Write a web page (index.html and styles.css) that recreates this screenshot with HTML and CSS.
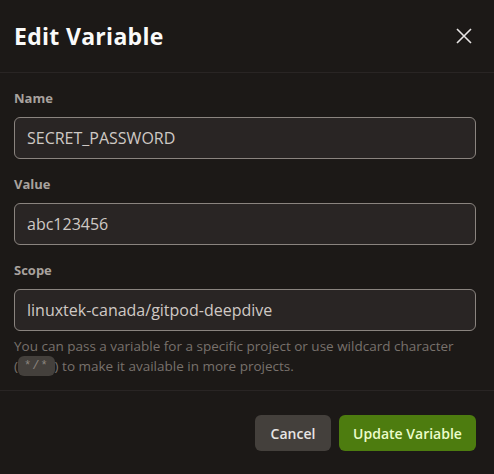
FILE: index.html
```html
<!DOCTYPE html>
<html lang="en">
  <head>
    <meta charset="utf-8" />
    <title>Edit Variable</title>
    <link rel="stylesheet" href="styles.css">
  </head>
  <body>
    <div class="modal">
      <div class="modal-header">
        <h3 class="modal-title">Edit Variable</h3>
        <button class="close-btn" aria-label="Close">
          <svg width="16" height="16" viewBox="0 0 16 16">
            <path d="M1 1 L15 15 M15 1 L1 15" stroke="#e7e5e4" stroke-width="1.6" fill="none" />
          </svg>
        </button>
      </div>

      <div class="modal-body">
        <div class="field">
          <label class="field-label">Name</label>
          <input class="field-input" type="text" value="SECRET_PASSWORD" />
        </div>
        <div class="field">
          <label class="field-label">Value</label>
          <input class="field-input" type="text" value="abc123456" />
        </div>
        <div class="field">
          <label class="field-label">Scope</label>
          <input class="field-input" type="text" value="linuxtek-canada/gitpod-deepdive" />
          <p class="field-hint">
            You can pass a variable for a specific project or use wildcard character
            <span class="nowrap">(<code class="wildcard">*/*</code>)</span> to make it available in more projects.
          </p>
        </div>
      </div>

      <div class="modal-footer">
        <button class="btn btn-secondary">Cancel</button>
        <button class="btn btn-primary">Update Variable</button>
      </div>
    </div>
  </body>
</html>
```

FILE: styles.css
```css
html, body {
  margin: 0;
  padding: 0;
  background-color: #1c1917;
}

body {
  font-family: "Open Sans", "Noto Sans", sans-serif;
  color: #e7e5e4;
}

.modal {
  width: 494px;
  height: 474px;
  display: flex;
  flex-direction: column;
}

.modal-header {
  height: 72px;
  display: flex;
  align-items: center;
  justify-content: space-between;
  padding: 0 22px 0 14px;
  border-bottom: 1px solid #292524;
}

.modal-title {
  margin: 0;
  font-size: 23px;
  font-weight: 700;
  color: #fafaf9;
  letter-spacing: 0.3px;
}

.close-btn {
  background: none;
  border: none;
  padding: 0;
  width: 16px;
  height: 16px;
  display: flex;
}

.modal-body {
  padding: 15px 18px 14px 14px;
  display: flex;
  flex-direction: column;
  gap: 15px;
  border-bottom: 1px solid #292524;
}

.field {
  display: flex;
  flex-direction: column;
}

.field-label {
  font-size: 13px;
  font-weight: 700;
  line-height: 21px;
  color: #a8a29e;
  margin-bottom: 8px;
}

.field-input {
  height: 42px;
  box-sizing: border-box;
  border: 1px solid #8a847f;
  border-radius: 6px;
  background-color: #292524;
  color: #cfc9c4;
  font-family: "Open Sans", "Noto Sans", sans-serif;
  font-size: 16px;
  padding: 0 12px;
  outline: none;
}

.field-hint {
  margin: 5px 0 0 0;
  font-size: 13.5px;
  line-height: 20px;
  color: #78716c;
}

.nowrap {
  white-space: nowrap;
}

.wildcard {
  display: inline-block;
  vertical-align: top;
  height: 20px;
  line-height: 20px;
  font-family: "Liberation Mono", monospace;
  font-size: 12px;
  background-color: #44403c;
  color: #8c857f;
  border-radius: 6px;
  padding: 0 6px;
  letter-spacing: 1px;
}

.modal-footer {
  flex: 1;
  display: flex;
  justify-content: flex-end;
  align-items: flex-start;
  gap: 8px;
  padding: 24px 18px 0 14px;
}

.btn {
  height: 36px;
  border: none;
  border-radius: 6px;
  font-family: "Open Sans", "Noto Sans", sans-serif;
  font-size: 14px;
  font-weight: 600;
  padding: 0 12px;
  white-space: nowrap;
}

.btn-secondary {
  width: 76px;
  background-color: #44403c;
  color: #e7e5e4;
}

.btn-primary {
  width: 137px;
  background-color: #4d7c0f;
  color: #ecfccb;
}
```
